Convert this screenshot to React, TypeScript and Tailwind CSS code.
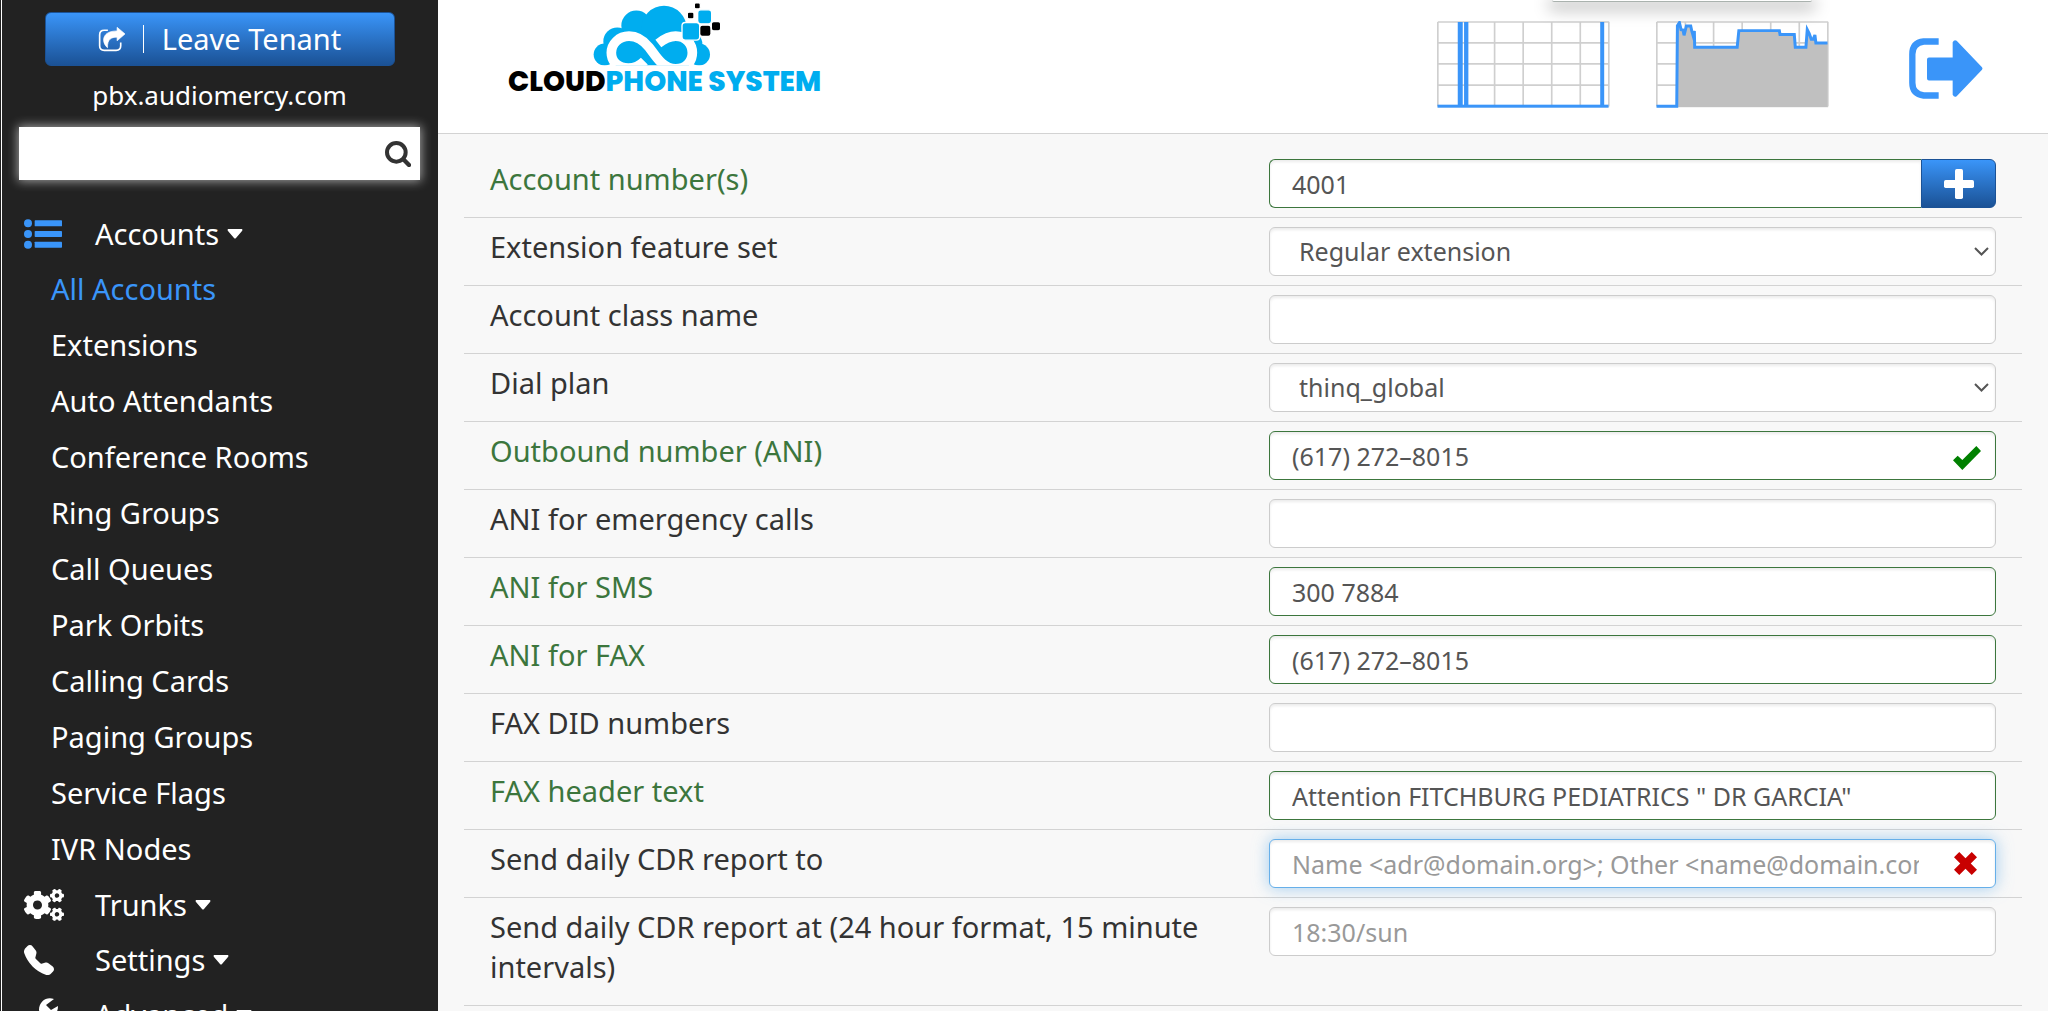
import type { ReactNode } from 'react'
import { BsTelephoneFill } from 'react-icons/bs'
import { FaCogs } from 'react-icons/fa'

type Field = {
  id: string
  label: string
  value?: string
  placeholder?: string
  kind?: 'text' | 'select' | 'add'
  state?: 'ok' | 'checked' | 'focus'
}

const FIELDS: Field[] = [
  { id: 'account', label: 'Account number(s)', value: '4001', kind: 'add', state: 'ok' },
  { id: 'feature-set', label: 'Extension feature set', value: 'Regular extension', kind: 'select' },
  { id: 'class-name', label: 'Account class name' },
  { id: 'dial-plan', label: 'Dial plan', value: 'thinq_global', kind: 'select' },
  { id: 'ani', label: 'Outbound number (ANI)', value: '(617) 272–8015', state: 'checked' },
  { id: 'ani-emergency', label: 'ANI for emergency calls' },
  { id: 'ani-sms', label: 'ANI for SMS', value: '300 7884', state: 'ok' },
  { id: 'ani-fax', label: 'ANI for FAX', value: '(617) 272–8015', state: 'ok' },
  { id: 'fax-did', label: 'FAX DID numbers' },
  { id: 'fax-header', label: 'FAX header text', value: 'Attention FITCHBURG PEDIATRICS " DR GARCIA"', state: 'ok' },
  {
    id: 'cdr-to',
    label: 'Send daily CDR report to',
    placeholder: 'Name <adr@domain.org>; Other <name@domain.com>',
    state: 'focus',
  },
  {
    id: 'cdr-at',
    label: 'Send daily CDR report at (24 hour format, 15 minute intervals)',
    placeholder: '18:30/sun',
  },
]

const ACCOUNT_LINKS = [
  'All Accounts',
  'Extensions',
  'Auto Attendants',
  'Conference Rooms',
  'Ring Groups',
  'Call Queues',
  'Park Orbits',
  'Calling Cards',
  'Paging Groups',
  'Service Flags',
  'IVR Nodes',
]

function ShareIcon() {
  return (
    <svg viewBox="0 0 82 74" className="h-[25px] w-[27px]" aria-hidden="true">
      <path
        d="M30 9H19Q5 9 5 23V56Q5 70 19 70H55Q69 70 69 56V46"
        fill="none"
        stroke="currentColor"
        strokeWidth="5"
      />
      <path
        d="M58 0L82 20L58 41V30C40 30 28 36 29 62C10 46 10 11 58 11Z"
        fill="currentColor"
        stroke="currentColor"
        strokeWidth="2"
        strokeLinejoin="round"
      />
    </svg>
  )
}

function SearchIcon() {
  return (
    <svg viewBox="0 0 78 78" className="h-[26px] w-[26px]" fill="none" stroke="currentColor" aria-hidden="true">
      <circle cx="34" cy="34" r="28" strokeWidth="12" />
      <path d="M55 55L72 72" strokeWidth="13" strokeLinecap="round" />
    </svg>
  )
}

function ListIcon() {
  return (
    <svg viewBox="0 0 114 90" className="h-[30px] w-[38px] text-[#3a95f9]" fill="currentColor" aria-hidden="true">
      <circle cx="12" cy="13" r="12" />
      <circle cx="12" cy="45" r="12" />
      <circle cx="12" cy="77" r="12" />
      <rect x="32" y="4" width="82" height="18" rx="2" />
      <rect x="32" y="36" width="82" height="18" rx="2" />
      <rect x="32" y="68" width="82" height="18" rx="2" />
    </svg>
  )
}

function WrenchIcon() {
  return (
    <svg viewBox="0 0 36 36" className="h-9 w-9" fill="currentColor" aria-hidden="true">
      <path d="M30 2C23 -1 15 4 15 13L16 17L3 29C0 33 4 37 8 34L20 21C27 23 34 18 34 9L27 13L22 8Z" />
    </svg>
  )
}

function LogoutIcon() {
  return (
    <svg viewBox="0 0 222 182" className="h-[61px] w-[74px] text-[#3a95f9]" aria-hidden="true">
      <path
        d="M89 10H44Q10 14 10 48V134Q10 168 44 172H89"
        fill="none"
        stroke="currentColor"
        strokeWidth="19"
        strokeLinejoin="round"
      />
      <path
        d="M60 58H131V12Q136 3 143 8L219 87Q222 91 219 95L143 174Q136 179 131 170V127H60Q54 127 54 121V64Q54 58 60 58Z"
        fill="currentColor"
      />
    </svg>
  )
}

function Logo() {
  return (
    <a href="#home" className="ml-[70px] flex flex-col font-[Poppins,Inter,sans-serif]">
      <svg viewBox="312 8 384 188" className="mt-[3px] ml-[85px] h-[63px] w-32" aria-hidden="true">
        <defs>
          <clipPath id="cloud-base">
            <rect x="300" y="0" width="400" height="195" />
          </clipPath>
        </defs>
        <g clipPath="url(#cloud-base)">
          <g fill="#00adef">
            <circle cx="347" cy="162" r="33" />
            <circle cx="385" cy="123" r="42" />
            <circle cx="442" cy="75" r="45" />
            <circle cx="525" cy="84" r="68" />
            <circle cx="630" cy="162" r="33" />
            <circle cx="606" cy="130" r="34" />
            <rect x="380" y="90" width="220" height="105" />
          </g>
          <path
            d="M508 129C530 112 545 107 560 107C590 107 610 130 610 157C610 184 590 205 560 205C520 205 500 165 480 140C462 118 445 107 420 107C390 107 367 130 367 157C367 184 388 203 418 203C440 203 452 196 466 182"
            fill="none"
            stroke="#fff"
            strokeWidth="29"
          />
        </g>
        <g stroke="#fff" strokeWidth="4">
          <rect x="579" y="66" width="53" height="53" rx="10" fill="#00adef" />
          <rect x="626" y="28" width="42" height="42" rx="9" fill="#00adef" />
          <rect x="632" y="74" width="34" height="34" rx="8" fill="#000" />
          <rect x="667" y="63" width="28" height="28" rx="7" fill="#000" />
          <rect x="595" y="35" width="20" height="20" rx="5" fill="#000" />
          <rect x="616" y="7" width="18" height="18" rx="5" fill="#000" />
        </g>
      </svg>
      <span className="text-[28px] leading-8 font-extrabold whitespace-nowrap text-black">
        CLOUD<span className="text-[#00adef]">PHONE SYSTEM</span>
      </span>
    </a>
  )
}

function Grid() {
  return (
    <path
      d="M2 3H518M2 66H518M2 129H518M2 193H518M2 257H518M2 3V257M88 3V257M173 3V257M259 3V257M345 3V257M431 3V257M517 3V257"
      fill="none"
      stroke="#cfcfcf"
      strokeWidth="5"
    />
  )
}

function CallsChart() {
  return (
    <svg viewBox="0 0 520 262" className="mt-[21px] h-[87px] w-[173px]" role="img" aria-label="Calls">
      <Grid />
      <g fill="#3a95f9">
        <rect x="62" y="3" width="15" height="256" />
        <rect x="81" y="3" width="13" height="256" />
        <rect x="491" y="3" width="12" height="256" />
        <rect x="1" y="252" width="515" height="9" />
      </g>
    </svg>
  )
}

function LoadChart() {
  const line =
    'H62L64 14L70 5L75 26L81 27L84 43L91 15L104 15L107 29L111 43L115 30L116 79H244L249 29H371L373 41H416L419 79H451L455 26L461 38L467 55H473L478 42L481 66H516'
  return (
    <svg viewBox="0 0 520 262" className="mt-[21px] ml-[46px] h-[87px] w-[173px]" role="img" aria-label="Load">
      <Grid />
      <path d={'M62 257' + line + 'V259H62Z'} fill="#c0c0c0" />
      <path d={'M1 257' + line} fill="none" stroke="#3a95f9" strokeWidth="9" />
    </svg>
  )
}

function MenuHead({ icon, children }: { icon: ReactNode; children: ReactNode }) {
  return (
    <button type="button" className="flex h-[55px] w-full items-center pl-[5px] text-left">
      <span className="flex w-[71px] shrink-0">{icon}</span>
      {children}
      <svg viewBox="0 0 16 10" className="ml-2 h-2.5 w-4" fill="currentColor" aria-hidden="true">
        <path d="M1 0H15Q16 1 15 2L9 9Q8 10 7 9L1 2Q0 1 1 0Z" />
      </svg>
    </button>
  )
}

function Sidebar() {
  return (
    <aside className="w-[436px] shrink-0 overflow-hidden bg-[#222] pt-3 pr-[18px] pl-[17px] text-[29px] text-white">
      <div className="flex flex-col items-center">
        <button
          type="button"
          className="flex h-[54px] w-[350px] items-center justify-center rounded-md border border-[#1b5296] bg-linear-to-b from-[#3a95f9] to-[#1b5296]"
        >
          <ShareIcon />
          <span className="mr-[18px] ml-[18px] h-7 w-px bg-white" />
          Leave Tenant
        </button>
        <p className="mt-[9px] text-[26px] leading-10">pbx.audiomercy.com</p>
      </div>
      <form className="mt-3 flex h-[53px] items-center bg-white pr-[9px] shadow-[0_0_10px_1px_#fff9]">
        <input aria-label="Search" className="h-full min-w-0 flex-1 bg-transparent px-4 text-[#333] outline-none" />
        <button type="button" aria-label="Search" className="text-[#333]">
          <SearchIcon />
        </button>
      </form>
      <nav className="mt-[26px]">
        <MenuHead icon={<ListIcon />}>Accounts</MenuHead>
        <ul>
          {ACCOUNT_LINKS.map((name, i) => (
            <li key={name}>
              <a href="#accounts" className={`block pl-8 leading-14 ${i === 0 ? 'text-[#3a95f9]' : ''}`}>
                {name}
              </a>
            </li>
          ))}
        </ul>
        <MenuHead icon={<FaCogs className="h-10 w-10" />}>Trunks</MenuHead>
        <MenuHead icon={<BsTelephoneFill className="h-[30px] w-[30px]" />}>Settings</MenuHead>
        <MenuHead icon={<WrenchIcon />}>Advanced</MenuHead>
      </nav>
    </aside>
  )
}

const BOX =
  'h-[49px] w-full min-w-0 rounded-md border bg-white px-[22px] text-[25px] text-[#555] outline-none placeholder:text-[#999]'
const INSET = 'shadow-[inset_0_2px_3px_#00000014]'
const GLOW = 'shadow-[inset_0_2px_3px_#00000014,0_0_16px_#66afe999]'

function Control({ field }: { field: Field }) {
  const { id, value, placeholder, kind, state } = field

  if (kind === 'add') {
    return (
      <div className="flex">
        <input id={id} defaultValue={value} className={`${BOX} ${INSET} rounded-r-none border-r-0 border-[#3c763d]`} />
        <button
          type="button"
          aria-label="Add number"
          className="flex w-[75px] shrink-0 items-center justify-center rounded-r-md border border-[#1b5296] bg-linear-to-b from-[#3a95f9] to-[#1b5296] text-white"
        >
          <svg viewBox="0 0 90 90" className="h-[30px] w-[30px]" fill="currentColor" aria-hidden="true">
            <rect x="33" width="24" height="90" rx="5" />
            <rect y="33" width="90" height="24" rx="5" />
          </svg>
        </button>
      </div>
    )
  }

  if (kind === 'select') {
    return (
      <div className="relative">
        <select id={id} defaultValue={value} className={`${BOX} ${INSET} appearance-none border-[#ccc] pl-[29px]`}>
          <option>{value}</option>
        </select>
        <svg
          viewBox="0 0 15 9"
          className="pointer-events-none absolute top-5 right-[7px] h-[9px] w-[15px] text-[#555]"
          fill="none"
          stroke="currentColor"
          strokeWidth="2"
          aria-hidden="true"
        >
          <path d="M1 1L7.5 7.5L14 1" />
        </svg>
      </div>
    )
  }

  if (state === 'checked' || state === 'focus') {
    return (
      <div className="relative">
        <input
          id={id}
          defaultValue={value}
          placeholder={placeholder}
          className={`${BOX} pr-[76px] ${
            state === 'checked' ? `border-[#3c763d] ${INSET}` : `border-[#66afe9] ${GLOW}`
          }`}
        />
        {state === 'checked' ? (
          <svg
            viewBox="0 0 84 72"
            className="absolute top-[15px] right-[15px] h-6 w-7 text-[#008000]"
            fill="currentColor"
            aria-hidden="true"
          >
            <path d="M0 43L14 29L28 42L70 0L84 15L28 72Z" />
          </svg>
        ) : (
          <svg
            viewBox="0 0 70 70"
            className="absolute top-[13px] right-[19px] h-[23px] w-[23px] text-[#c80000]"
            fill="currentColor"
            aria-hidden="true"
          >
            <path d="M16 0L35 19L54 0L70 16L51 35L70 54L54 70L35 51L16 70L0 54L19 35L0 16Z" />
          </svg>
        )}
      </div>
    )
  }

  return (
    <input
      id={id}
      defaultValue={value}
      placeholder={placeholder}
      className={`${BOX} ${INSET} ${state === 'ok' ? 'border-[#3c763d]' : 'border-[#ccc]'}`}
    />
  )
}

export default function App() {
  return (
    <div className="flex h-screen overflow-hidden bg-[#f8f8f8] font-['Lucida_Grande','Noto_Sans',sans-serif] text-[#333]">
      <div className="w-0.5 shrink-0 border-r border-white bg-[#222]" />
      <Sidebar />
      <main className="min-w-0 flex-1">
        <header className="relative flex h-[134px] items-start border-b border-[#d3d3d3] bg-white pr-[65px]">
          <Logo />
          <div className="ml-auto flex">
            <CallsChart />
            <LoadChart />
            <a href="#logout" aria-label="Log out" className="mt-[38px] ml-20">
              <LogoutIcon />
            </a>
          </div>
          <div className="absolute top-0 right-[236px] h-0.5 w-[260px] rounded-b-sm border-b border-[#aab2ae] bg-white shadow-[0_4px_16px_4px_#0004]" />
        </header>
        <form className="px-[26px] pt-4">
          {FIELDS.map((field) => (
            <div key={field.id} className="grid grid-cols-2 border-b border-[#d3d3d3] py-[9px]">
              <label
                htmlFor={field.id}
                className={`px-[26px] pb-[9px] text-[29px] leading-10 ${field.state && field.state !== 'focus' ? 'text-[#3c763d]' : ''}`}
              >
                {field.label}
              </label>
              <div className="px-[26px]">
                <Control field={field} />
              </div>
            </div>
          ))}
        </form>
      </main>
    </div>
  )
}
